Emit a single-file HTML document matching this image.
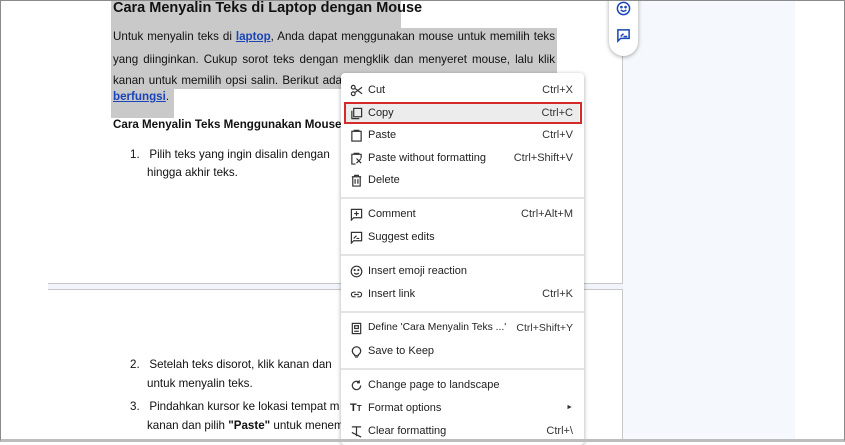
<!DOCTYPE html>
<html><head><meta charset="utf-8"><style>
*{margin:0;padding:0;box-sizing:border-box}
body{width:845px;height:442px;overflow:hidden;background:#fff;font-family:"Liberation Sans",Arial,sans-serif;position:relative}
.frame{position:absolute;left:0;top:0;width:845px;height:442px;border:1px solid #8a8a8a;border-bottom:3px solid #bdbdbd;z-index:50;pointer-events:none}
.panel{position:absolute;left:623px;top:0;width:172px;height:442px;background:#f5f8fc}
.vline{position:absolute;left:622px;top:0;width:1px;height:442px;background:#c8c8c8}
.pb{position:absolute;left:48px;top:283px;width:575px;height:7px;background:#f1f5fb;border-top:1px solid #c8c8c8;border-bottom:1px solid #c8c8c8}
.t{position:absolute;font-size:12px;color:#111;white-space:nowrap;line-height:16px}
.j{position:absolute;left:113px;width:442px;height:16px;overflow:hidden;font-size:11.6px;color:#111;line-height:16px;text-align:justify;text-align-last:justify;white-space:normal}
.sel{position:absolute;background:#c9c9c9}
a{color:#1a44b8;font-weight:bold;text-decoration:underline}
.menu{position:absolute;left:341px;top:73px;width:243px;height:372px;background:#fff;box-shadow:0 1px 4px rgba(0,0,0,.35);border-radius:4px;font-size:11px;color:#222;z-index:10}
.it{position:absolute;left:0;width:243px;height:22px;line-height:22px}
.it .ic{position:absolute;left:9px;top:5px;width:13px;height:13px}
.it .l{position:absolute;left:27px}
.it .k{position:absolute;right:11px;color:#333}
.sep{position:absolute;left:0;width:243px;height:2px;background:#e4e4e4}
.red{position:absolute;left:344px;top:102px;width:238px;height:22px;border:2px solid #d42a2a;z-index:12}
.hl{position:absolute;left:4px;top:29px;width:234px;height:21px;background:#ececec}
.side{position:absolute;left:609px;top:-10px;width:29px;height:66px;background:#fff;border-radius:0 0 15px 15px;box-shadow:0 1px 4px rgba(0,0,0,.35);z-index:5}
</style></head><body>
<div class="panel"></div>
<div class="vline"></div>
<div class="pb"></div>

<div class="sel" style="left:111px;top:0;width:290px;height:28px"></div>
<div class="sel" style="left:111px;top:28px;width:446px;height:61px"></div>
<div class="sel" style="left:111px;top:89px;width:63px;height:29px"></div>

<div class="t" style="left:113px;top:0;font-size:14.5px;font-weight:bold">Cara Menyalin Teks di Laptop dengan Mouse</div>
<div class="j" style="top:29px">Untuk menyalin teks di <a>laptop</a>, Anda dapat menggunakan mouse untuk memilih teks</div>
<div class="j" style="top:52px">yang diinginkan. Cukup sorot teks dengan mengklik dan menyeret mouse, lalu klik</div>
<div class="t" style="left:113px;top:73px;font-size:11.6px;word-spacing:1px">kanan untuk memilih opsi salin. Berikut adalah alternatif ketika <a>touchpad laptop tidak</a></div>
<div class="t" style="left:113px;top:89px;font-size:11.6px"><a>berfungsi</a>.</div>
<div class="t" style="left:113px;top:117px;font-weight:bold;font-size:11.6px">Cara Menyalin Teks Menggunakan Mouse</div>
<div class="t" style="left:130px;top:147px;font-size:11.6px">1.&nbsp;&nbsp; Pilih teks yang ingin disalin dengan</div>
<div class="t" style="left:147px;top:165px;font-size:11.6px">hingga akhir teks.</div>
<div class="t" style="left:130px;top:357px;font-size:11.6px">2.&nbsp;&nbsp; Setelah teks disorot, klik kanan dan</div>
<div class="t" style="left:147px;top:376px;font-size:11.6px">untuk menyalin teks.</div>
<div class="t" style="left:130px;top:399px;font-size:11.6px">3.&nbsp;&nbsp; Pindahkan kursor ke lokasi tempat m</div>
<div class="t" style="left:147px;top:418px;font-size:11.6px">kanan dan pilih <b>"Paste"</b> untuk menemp</div>

<div class="side">
<svg style="position:absolute;left:7px;top:11px" width="15" height="15" viewBox="0 0 16 16" fill="none" stroke="#1a44b8" stroke-width="1.6"><circle cx="8" cy="8" r="6.5"/><circle cx="5.8" cy="6.5" r=".6" fill="#1a44b8"/><circle cx="10.2" cy="6.5" r=".6" fill="#1a44b8"/><path d="M5 9.5q3 3 6 0"/></svg>
<svg style="position:absolute;left:7px;top:38px" width="15" height="15" viewBox="0 0 16 16" fill="none" stroke="#1a44b8" stroke-width="1.6"><path d="M2 2h12v9H5l-3 3z"/><path d="M5 9l3-3M8 9h4"/></svg>
</div>

<div class="red"></div>
<div class="menu">
<div class="hl"></div>
<div class="it" style="top:6px"><svg class="ic" viewBox="0 0 14 14" fill="none" stroke="#333" stroke-width="1.3"><circle cx="3.5" cy="3.5" r="2"/><circle cx="3.5" cy="10.5" r="2"/><path d="M5 4.5l8 6M5 9.5l8-6"/></svg><span class="l">Cut</span><span class="k">Ctrl+X</span></div>
<div class="it" style="top:29px"><svg class="ic" viewBox="0 0 14 14" fill="none" stroke="#333" stroke-width="1.3"><rect x="4" y="1.5" width="8.5" height="9"/><path d="M2 4v8.5h8"/></svg><span class="l">Copy</span><span class="k">Ctrl+C</span></div>
<div class="it" style="top:51px"><svg class="ic" viewBox="0 0 14 14" fill="none" stroke="#333" stroke-width="1.3"><rect x="2" y="2.5" width="10" height="10.5"/><path d="M4.5 2.5v-1h5v1" fill="#333"/></svg><span class="l">Paste</span><span class="k">Ctrl+V</span></div>
<div class="it" style="top:74px"><svg class="ic" viewBox="0 0 14 14" fill="none" stroke="#333" stroke-width="1.3"><path d="M6 13H2V2.5h10v4"/><path d="M4.5 2.5v-1h5v1M7 7l5 5M12 7l-5 5"/></svg><span class="l">Paste without formatting</span><span class="k">Ctrl+Shift+V</span></div>
<div class="it" style="top:96px"><svg class="ic" viewBox="0 0 14 14" fill="none" stroke="#333" stroke-width="1.3"><path d="M2 3h10M5 3V1.5h4V3M3 3v10h8V3M5.5 5.5v5M8.5 5.5v5"/></svg><span class="l">Delete</span></div>
<div class="sep" style="top:124px"></div>
<div class="it" style="top:130px"><svg class="ic" viewBox="0 0 14 14" fill="none" stroke="#333" stroke-width="1.3"><path d="M1.5 1.5h11v9H4l-2.5 2.5zM7 3.5v5M4.5 6h5"/></svg><span class="l">Comment</span><span class="k">Ctrl+Alt+M</span></div>
<div class="it" style="top:153px"><svg class="ic" viewBox="0 0 14 14" fill="none" stroke="#333" stroke-width="1.3"><path d="M1.5 1.5h11v9H4l-2.5 2.5zM4 8l3-3M7 8h3"/></svg><span class="l">Suggest edits</span></div>
<div class="sep" style="top:181px"></div>
<div class="it" style="top:187px"><svg class="ic" viewBox="0 0 14 14" fill="none" stroke="#333" stroke-width="1.3"><circle cx="7" cy="7" r="5.7"/><path d="M4.5 8.5q2.5 2.5 5 0"/><circle cx="5" cy="5.5" r=".5" fill="#333"/><circle cx="9" cy="5.5" r=".5" fill="#333"/></svg><span class="l">Insert emoji reaction</span></div>
<div class="it" style="top:210px"><svg class="ic" viewBox="0 0 14 14" fill="none" stroke="#333" stroke-width="1.3"><path d="M6 4.5H4a2.5 2.5 0 000 5h2M8 4.5h2a2.5 2.5 0 010 5H8M4.5 7h5"/></svg><span class="l">Insert link</span><span class="k">Ctrl+K</span></div>
<div class="sep" style="top:238px"></div>
<div class="it" style="top:244px"><svg class="ic" viewBox="0 0 14 14" fill="none" stroke="#333" stroke-width="1.3"><rect x="2.5" y="1.5" width="9" height="11"/><rect x="5" y="4" width="4" height="3"/><path d="M4.5 10h5"/></svg><span class="l" style="font-size:10.3px">Define 'Cara Menyalin Teks ...'</span><span class="k" style="font-size:10.5px">Ctrl+Shift+Y</span></div>
<div class="it" style="top:267px"><svg class="ic" viewBox="0 0 14 14" fill="none" stroke="#333" stroke-width="1.3"><path d="M5 10.5a4.5 4.5 0 114 0v1H5zM5.5 13h3"/></svg><span class="l">Save to Keep</span></div>
<div class="sep" style="top:295px"></div>
<div class="it" style="top:301px"><svg class="ic" viewBox="0 0 14 14" fill="none" stroke="#333" stroke-width="1.3"><path d="M11.5 7a4.5 4.5 0 11-1.5-3.4M10 1.5v2.5h-2.5"/></svg><span class="l">Change page to landscape</span></div>
<div class="it" style="top:324px"><span class="ic" style="font-size:11px;font-weight:bold;top:0;left:9px;line-height:22px">T<span style="font-size:8px">T</span></span><span class="l">Format options</span><span class="k" style="font-size:7px">&#9658;</span></div>
<div class="it" style="top:347px"><svg class="ic" viewBox="0 0 14 14" fill="none" stroke="#333" stroke-width="1.3"><path d="M2 2h10M7 2v10M2 8l10 5"/></svg><span class="l">Clear formatting</span><span class="k">Ctrl+\</span></div>
</div>
<div class="frame"></div>
</body></html>
